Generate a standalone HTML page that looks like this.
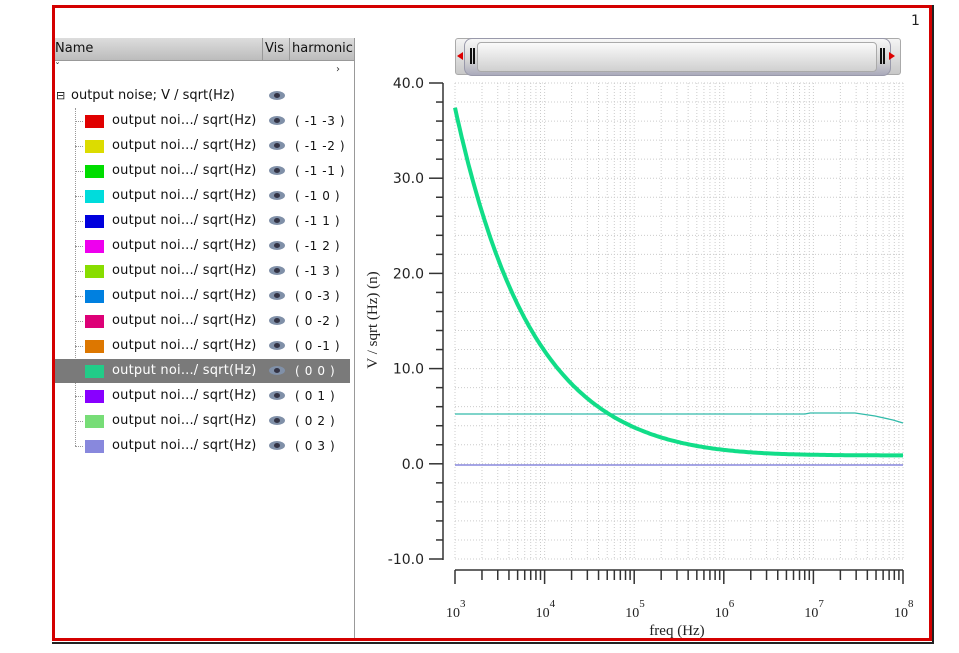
<!DOCTYPE html>
<html><head><meta charset="utf-8">
<style>
body{margin:0;width:959px;height:653px;background:#fff;position:relative;overflow:hidden;font-family:"DejaVu Sans","Liberation Sans",sans-serif;}
.frame{position:absolute;left:52px;top:5px;width:874px;height:630px;border:3px solid #d40000;}
.outer{position:absolute;left:52px;top:5px;width:882px;height:639px;border-right:2px solid #222;border-bottom:2px solid #222;box-sizing:border-box;}
.panel{position:absolute;left:55px;top:38px;width:299px;height:600px;border-right:1px solid #999;}
.hdr{position:absolute;left:0;top:0;width:299px;height:22px;background:linear-gradient(#ddd,#bcbcbc);border-bottom:1px solid #999;font-size:13px;line-height:22px;color:#111;}
.hdr span{position:absolute;top:0;}
.row{position:absolute;left:0;width:295px;height:24px;font-size:13px;line-height:24px;color:#111;white-space:nowrap;}
.row.sel{background:#7a7a7a;color:#fff;}
.sw{position:absolute;left:30px;top:6px;width:19px;height:13px;}
.row .t{position:absolute;left:57px;letter-spacing:0.2px;}
.eye{position:absolute;left:214px;top:7px;width:16px;height:9px;border-radius:50%;background:#8090a8;}
.eye:after{content:"";position:absolute;left:5px;top:2px;width:6px;height:5px;border-radius:50%;background:#334;}
.row .h{position:absolute;left:240px;font-size:12px;letter-spacing:0.6px;}
</style></head><body>
<div class="outer"></div>
<div class="frame"></div>
<div style="position:absolute;left:911px;top:13px;font-size:14px;color:#222">1</div>
<div class="panel">
 <div class="hdr"><span style="left:0">Name</span><span style="left:207px;border-left:1px solid #999;padding-left:2px;height:22px">Vis</span><span style="left:234px;border-left:1px solid #999;padding-left:2px;height:22px;width:62px;overflow:hidden">harmonic</span></div>
 <div style="position:absolute;left:0;top:24px;font-size:10px;color:#333">&#711;</div>
 <div style="position:absolute;left:281px;top:26px;font-size:10px;color:#333">&#8250;</div>
 <div style="position:absolute;left:20px;top:70px;width:0;height:338px;border-left:1px dotted #999"></div>
 <div id="rows"></div>
</div>
<svg id="plot" width="959" height="653" style="position:absolute;left:0;top:0"></svg>
<div style="position:absolute;left:455px;top:38px;width:446px;height:37px;background:linear-gradient(#f4f4f4,#c8c8c8);border:1px solid #aaa;box-sizing:border-box;border-radius:3px"></div>
<div style="position:absolute;left:464px;top:38px;width:427px;height:38px;background:linear-gradient(#f8f8f8,#d4d4d4 60%,#aab);border:1px solid #99a;box-sizing:border-box;border-radius:8px"></div>
<div style="position:absolute;left:477px;top:42px;width:400px;height:30px;background:linear-gradient(#fafafa,#d0d0d0);border:1px solid #aaa;box-sizing:border-box;border-radius:4px"></div>
<div style="position:absolute;left:470px;top:48px;height:16px;border-left:2px solid #111;border-right:2px solid #111;width:1px"></div>
<div style="position:absolute;left:880px;top:48px;width:1px;height:16px;border-left:2px solid #111;border-right:2px solid #111"></div>
<div style="position:absolute;left:457px;top:52px;width:0;height:0;border-top:4px solid transparent;border-bottom:4px solid transparent;border-right:6px solid #d00"></div>
<div style="position:absolute;left:889px;top:52px;width:0;height:0;border-top:4px solid transparent;border-bottom:4px solid transparent;border-left:6px solid #d00"></div>
<script>
var rows=[["#e00000","( -1 -3 )"],["#dcdc00","( -1 -2 )"],["#00dd00","( -1 -1 )"],["#00dcdc","( -1 0 )"],["#0000dd","( -1 1 )"],["#ee00ee","( -1 2 )"],["#88dd00","( -1 3 )"],["#0080e0","( 0 -3 )"],["#dd0077","( 0 -2 )"],["#dd7700","( 0 -1 )"],["#22cc88","( 0 0 )"],["#8800ff","( 0 1 )"],["#77dd77","( 0 2 )"],["#8888dd","( 0 3 )"]];
var h='<div class="row" style="top:46px"><span style="position:absolute;left:1px;top:0;font-size:11px">&#8863;</span><span style="position:absolute;left:16px">output noise; V / sqrt(Hz)</span><div class="eye"></div></div>';
rows.forEach(function(r,i){var t=71+i*25;h+='<div style="position:absolute;left:20px;top:'+(t+12)+'px;width:8px;border-top:1px dotted #999"></div><div class="row'+(i==10?' sel':'')+'" style="top:'+t+'px"><div class="sw" style="background:'+r[0]+'"></div><span class="t">output noi.../ sqrt(Hz)</span><div class="eye"></div><span class="h">'+r[1]+'</span></div>';});
document.getElementById('rows').innerHTML=h;
var s='',X0=455,DX=89.6,Y=function(v){return 464-v*9.52;};
function fx(f){return X0+(Math.log10(f)-3)*DX;}
for(var k=0;k<=25;k++){var y=83+k*19.04;s+='<line x1="455" x2="903" y1="'+y+'" y2="'+y+'" stroke="#ccc" stroke-dasharray="1,2"/>';s+='<line x1="'+(k%5==0?429:436)+'" x2="443" y1="'+y+'" y2="'+y+'" stroke="#333" stroke-width="1.5"/>';}
for(var d=3;d<8;d++)for(var m=1;m<10;m++){var x=fx(m*Math.pow(10,d));s+='<line x1="'+x+'" x2="'+x+'" y1="83" y2="560" stroke="#ccc" stroke-dasharray="1,2"/>';s+='<line x1="'+x+'" x2="'+x+'" y1="570" y2="'+(m==1?584:580)+'" stroke="#333" stroke-width="1.5"/>';}
s+='<line x1="903" x2="903" y1="83" y2="560" stroke="#ccc" stroke-dasharray="1,2"/><line x1="903" x2="903" y1="570" y2="584" stroke="#333" stroke-width="1.5"/>';
s+='<line x1="443" x2="443" y1="83" y2="560" stroke="#333" stroke-width="1.5"/><line x1="455" x2="903" y1="570" y2="570" stroke="#333" stroke-width="1.5"/>';
var lab=["40.0","30.0","20.0","10.0","0.0","-10.0"];
lab.forEach(function(l,i){s+='<text x="424" y="'+(88+i*95.2)+'" text-anchor="end" font-size="14" fill="#222" font-family="DejaVu Sans,sans-serif">'+l+'</text>';});
for(var d=3;d<=8;d++){var x=fx(Math.pow(10,d));s+='<text x="'+(x-2)+'" y="617" text-anchor="middle" font-size="14" fill="#222" font-family="Liberation Serif,serif">10</text><text x="'+(x+5)+'" y="607" font-size="11" fill="#222" font-family="Liberation Serif,serif">'+d+'</text>';}
s+='<text x="677" y="635" text-anchor="middle" font-size="15" fill="#222" font-family="Liberation Serif,serif">freq (Hz)</text>';
s+='<text transform="translate(377,320) rotate(-90)" text-anchor="middle" font-size="15" fill="#222" font-family="Liberation Serif,serif">V / sqrt (Hz) (n)</text>';
s+='<line x1="455" x2="903" y1="465" y2="465" stroke="#8888dd" stroke-width="1.5"/>';
s+='<path d="M455 414 L805 414 L810 413 L855 413 L875 416 L893 420 L903 423" fill="none" stroke="#33bbaa" stroke-width="1.3"/>';
var p='';for(var i=0;i<=200;i++){var lf=3+i*5/200,f=Math.pow(10,lf),v=Math.sqrt(1.4e6/f+0.8);p+=(i?'L':'M')+fx(f).toFixed(1)+' '+Y(v).toFixed(1);}
s+='<path d="'+p+'" fill="none" stroke="#11dd88" stroke-width="4"/>';
document.getElementById('plot').innerHTML=s;
</script>
</body></html>
